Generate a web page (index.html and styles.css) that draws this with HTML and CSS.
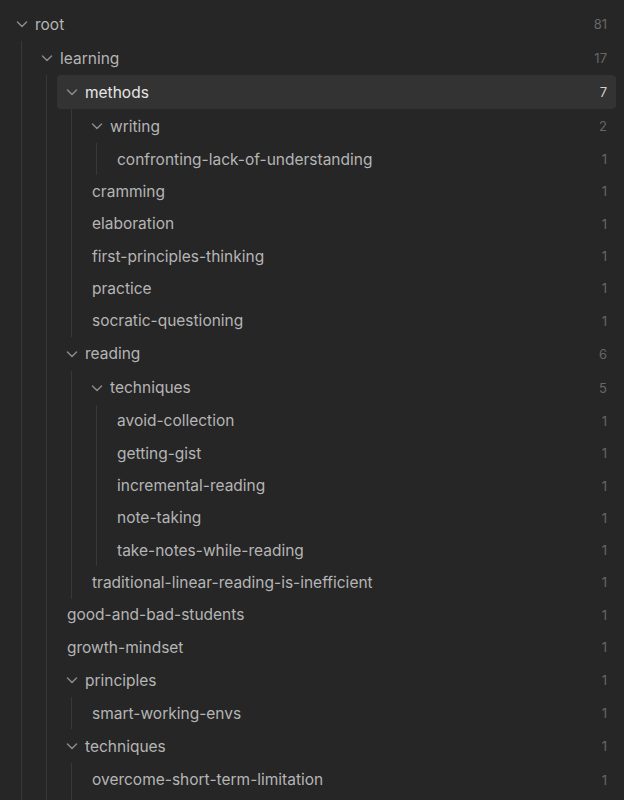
FILE: index.html
```html
<!DOCTYPE html>
<html>
<head>
<meta charset="utf-8">
<link rel="stylesheet" href="styles.css">
</head>
<body>
<div class="tree">
  <div class="item">
    <div class="row folder"><span class="chev"><svg viewBox="0 0 16 16" width="16" height="16"><path d="M3.5 6l4.5 4.5 4.5-4.5"/></svg></span><span class="name">root</span><span class="count">81</span></div>
    <div class="children">
      <div class="item">
        <div class="row folder"><span class="chev"><svg viewBox="0 0 16 16" width="16" height="16"><path d="M3.5 6l4.5 4.5 4.5-4.5"/></svg></span><span class="name">learning</span><span class="count">17</span></div>
        <div class="children">
          <div class="item">
            <div class="row folder active"><span class="chev"><svg viewBox="0 0 16 16" width="16" height="16"><path d="M3.5 6l4.5 4.5 4.5-4.5"/></svg></span><span class="name">methods</span><span class="count">7</span></div>
            <div class="children">
              <div class="item">
                <div class="row folder"><span class="chev"><svg viewBox="0 0 16 16" width="16" height="16"><path d="M3.5 6l4.5 4.5 4.5-4.5"/></svg></span><span class="name">writing</span><span class="count">2</span></div>
                <div class="children">
                  <div class="row leaf"><span class="name">confronting-lack-of-understanding</span><span class="count">1</span></div>
                </div>
              </div>
              <div class="row leaf"><span class="name">cramming</span><span class="count">1</span></div>
              <div class="row leaf"><span class="name">elaboration</span><span class="count">1</span></div>
              <div class="row leaf"><span class="name">first-principles-thinking</span><span class="count">1</span></div>
              <div class="row leaf"><span class="name">practice</span><span class="count">1</span></div>
              <div class="row leaf"><span class="name">socratic-questioning</span><span class="count">1</span></div>
            </div>
          </div>
          <div class="item">
            <div class="row folder"><span class="chev"><svg viewBox="0 0 16 16" width="16" height="16"><path d="M3.5 6l4.5 4.5 4.5-4.5"/></svg></span><span class="name">reading</span><span class="count">6</span></div>
            <div class="children">
              <div class="item">
                <div class="row folder"><span class="chev"><svg viewBox="0 0 16 16" width="16" height="16"><path d="M3.5 6l4.5 4.5 4.5-4.5"/></svg></span><span class="name">techniques</span><span class="count">5</span></div>
                <div class="children">
                  <div class="row leaf"><span class="name">avoid-collection</span><span class="count">1</span></div>
                  <div class="row leaf"><span class="name">getting-gist</span><span class="count">1</span></div>
                  <div class="row leaf"><span class="name">incremental-reading</span><span class="count">1</span></div>
                  <div class="row leaf"><span class="name">note-taking</span><span class="count">1</span></div>
                  <div class="row leaf"><span class="name">take-notes-while-reading</span><span class="count">1</span></div>
                </div>
              </div>
              <div class="row leaf"><span class="name">traditional-linear-reading-is-inefficient</span><span class="count">1</span></div>
            </div>
          </div>
          <div class="row leaf"><span class="name">good-and-bad-students</span><span class="count">1</span></div>
          <div class="row leaf"><span class="name">growth-mindset</span><span class="count">1</span></div>
          <div class="item">
            <div class="row folder"><span class="chev"><svg viewBox="0 0 16 16" width="16" height="16"><path d="M3.5 6l4.5 4.5 4.5-4.5"/></svg></span><span class="name">principles</span><span class="count">1</span></div>
            <div class="children">
              <div class="row leaf"><span class="name">smart-working-envs</span><span class="count">1</span></div>
            </div>
          </div>
          <div class="item">
            <div class="row folder"><span class="chev"><svg viewBox="0 0 16 16" width="16" height="16"><path d="M3.5 6l4.5 4.5 4.5-4.5"/></svg></span><span class="name">techniques</span><span class="count">1</span></div>
            <div class="children tail">
              <div class="row leaf"><span class="name">overcome-short-term-limitation</span><span class="count">1</span></div>
            </div>
          </div>
        </div>
      </div>
    </div>
  </div>
</div>
</body>
</html>
```

FILE: styles.css
```css
html, body {
  margin: 0;
  padding: 0;
  background: #262626;
  height: 800px;
  overflow: hidden;
}

body {
  font-family: Inter, "Noto Sans", sans-serif;
  font-size: 15.5px;
  color: #b5b5b5;
}

.tree {
  margin-left: -3px;
  padding-top: 7px;
  padding-bottom: 20px;
}

.children {
  margin-left: 24px;
  border-left: 1px solid #383838;
}

.tail {
  padding-bottom: 10px;
}

.row {
  display: flex;
  align-items: center;
  margin-left: 10px;
  margin-right: 8px;
  padding-right: 9px;
  border-radius: 4px;
  box-sizing: border-box;
  white-space: nowrap;
}

.folder {
  height: 34px;
  padding-left: 7px;
}

.leaf {
  height: 32.3px;
  padding-left: 10px;
}

.chev {
  width: 16px;
  height: 16px;
  flex: none;
  margin-right: 5px;
  display: flex;
}

.chev svg path {
  fill: none;
  stroke: #8a8a8a;
  stroke-width: 1.5;
  stroke-linecap: round;
  stroke-linejoin: round;
}

.name {
  flex: 1;
  min-width: 0;
}

.count {
  flex: none;
  font-size: 13px;
  color: #666666;
}

.active {
  background: #333333;
  color: #e6e6e6;
}

.active .count {
  color: #d0d0d0;
}
```
